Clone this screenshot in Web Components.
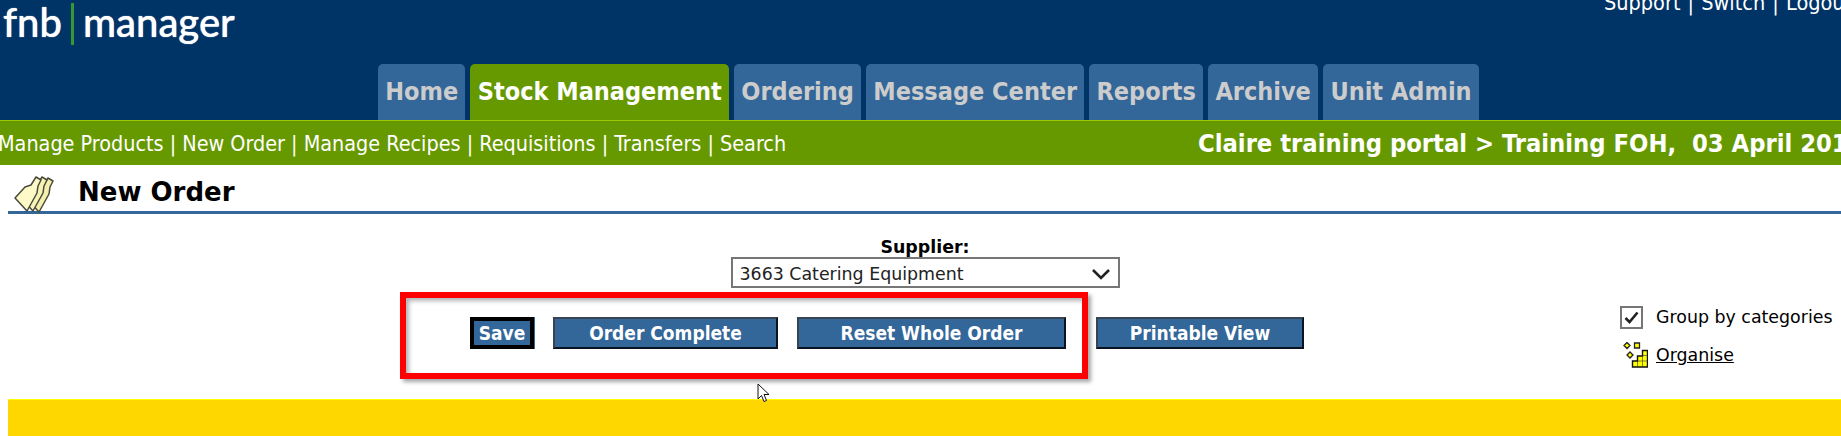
<!DOCTYPE html>
<html>
<head>
<meta charset="utf-8">
<title>New Order</title>
<style>
html, body { margin: 0; height: 436px; overflow: hidden; background: #fff; }
body { position: relative; width: 1841px; font-family: "DejaVu Sans", sans-serif; }
</style>
</head>
<body>
<fnb-header>
    <fnb-tab>Home</fnb-tab>
    <fnb-tab active>Stock Management</fnb-tab>
    <fnb-tab>Ordering</fnb-tab>
    <fnb-tab>Message Center</fnb-tab>
    <fnb-tab>Reports</fnb-tab>
    <fnb-tab>Archive</fnb-tab>
    <fnb-tab>Unit Admin</fnb-tab>
</fnb-header>
<fnb-subnav portal="Claire training portal &gt; Training FOH,&nbsp; 03 April 2017"></fnb-subnav>
<fnb-title>New Order</fnb-title>
<order-form></order-form>
<yellow-bar></yellow-bar>
<red-mark></red-mark>
<mouse-cursor></mouse-cursor>

<script>
class FnbHeader extends HTMLElement {
    constructor(){
        super();
        this.attachShadow({mode: 'open'})
    }
    connectedCallback(){
        this.shadowRoot.innerHTML = `
            <style>
            :host { display: block; height: 120px; background: #003366; overflow: hidden; }
            .top { display: flex; height: 64px; }
            .logo { display: flex; align-items: flex-start; flex: none; box-sizing: border-box; width: 1604px; color: #fff;
                    font: 500 40px/1 Lato, sans-serif; padding: 2px 0 0 3px; text-shadow: 0 0 1px #fff; }
            .logo i { display: block; width: 3px; height: 42px; background: #339933; margin: 1px 9px 0 9px; }
            .links { flex: none; color: #fff; font-size: 21.5px; font-stretch: condensed; word-spacing: 1px; line-height: 24px; margin-top: -9px; white-space: nowrap; }
            .tabs { display: flex; gap: 5px; padding-left: 378px; height: 56px; }
            </style>
            <div class="top">
                <div class="logo"><span>fnb</span><i></i><span>manager</span></div>
                <div class="links">Support | Switch | Logout</div>
            </div>
            <div class="tabs"><slot></slot></div>
        `
    }
}

class FnbTab extends HTMLElement {
    constructor(){
        super();
        this.attachShadow({mode: 'open'})
    }
    connectedCallback(){
        this.shadowRoot.innerHTML = `
            <style>
            :host { display: block; height: 56px; padding: 0 7.25px; background: #336699; color: #cccccc;
                    border-radius: 5px 5px 0 0; font: bold 25px/56px "DejaVu Sans", sans-serif; font-stretch: condensed; white-space: nowrap; }
            :host([active]) { background: #669900; color: #fff; }
            </style>
            <slot></slot>
        `
    }
}

class FnbSubnav extends HTMLElement {
    constructor(){
        super();
        this.attachShadow({mode: 'open'})
    }
    connectedCallback(){
        this.shadowRoot.innerHTML = `
            <style>
            :host { display: flex; align-items: center; height: 44px; background: #669900;
                    border-top: 1px solid #99cc00; color: #fff; overflow: hidden; white-space: nowrap; font-stretch: condensed; }
            .links { font-size: 21.4px; margin-left: -2px; flex: none; width: 1200px; }
            .portal { font-size: 25.3px; font-weight: bold; flex: none; }
            </style>
            <div class="links">Manage Products | New Order | Manage Recipes | Requisitions | Transfers | Search</div>
            <div class="portal">${this.getAttribute('portal')}</div>
        `
    }
}

class FnbTitle extends HTMLElement {
    constructor(){
        super();
        this.attachShadow({mode: 'open'})
    }
    connectedCallback(){
        this.shadowRoot.innerHTML = `
            <style>
            :host { display: flex; align-items: flex-start; height: 46px; margin-left: 8px; border-bottom: 3px solid #336699; }
            svg { width: 44px; height: 42px; margin: 9px 19px 0 7px; flex: none; overflow: visible; }
            h1 { margin: 12px 0 0; font-size: 26px; line-height: 30px; font-weight: bold; color: #000; }
            </style>
            <svg viewBox="10 4 44 42">
                <defs>
                    <path id="bottle" d="M10 28 L20 17 L26 15 L31 7 L36 10 L33 16 L32 23 L22 41 Z" stroke="#4a4a3a" stroke-width="1.5" stroke-linejoin="round"/>
                </defs>
                <use href="#bottle" transform="translate(12 1)" fill="#f4efac"/>
                <use href="#bottle" transform="translate(6 0)" fill="#f8f4b8"/>
                <use href="#bottle" fill="#fdfac8"/>
            </svg>
            <h1><slot></slot></h1>
        `
    }
}

class FnbButton extends HTMLElement {
    constructor(){
        super();
        this.attachShadow({mode: 'open'})
    }
    connectedCallback(){
        this.shadowRoot.innerHTML = `
            <style>
            :host { display: flex; align-items: center; justify-content: center; box-sizing: border-box; height: 32px;
                    background: #336699; color: #fff; border: 2px solid; border-color: #3a4450 #0a1420 #0a1420 #3a4450;
                    font: bold 19px "DejaVu Sans", sans-serif; font-stretch: condensed; white-space: nowrap; }
            :host([focused]) { border: 4px solid #000; box-shadow: 1px 0 0 #336699; }
            </style>
            <slot></slot>
        `
    }
}

class OrderForm extends HTMLElement {
    constructor(){
        super();
        this.attachShadow({mode: 'open'})
    }
    connectedCallback(){
        this.shadowRoot.innerHTML = `
            <style>
            :host { display: block; height: 185px; font-size: 17.4px; color: #000; }
            .supplier { display: flex; flex-direction: column; align-items: center; padding: 23px 0 0 9px; width: 1841px; box-sizing: border-box; }
            .supplier b { line-height: 20px; }
            .select { box-sizing: border-box; width: 389px; height: 31px; border: 2px solid #767676; display: flex; align-items: center;
                      justify-content: space-between; padding: 2px 7px 0 7px; color: #222; }
            .select svg { width: 20px; height: 12px; }
            .row { display: flex; gap: 19px; margin: 29px 0 0 470px; }
            .row fnb-button:nth-child(1) { width: 64px; }
            .row fnb-button:nth-child(2) { width: 225px; }
            .row fnb-button:nth-child(3) { width: 269px; margin-right: 11px; }
            .row fnb-button:nth-child(4) { width: 208px; }
            .side { position: absolute; left: 1620px; top: 305px; }
            .check { display: flex; align-items: center; gap: 13px; height: 24px; }
            .box { box-sizing: border-box; width: 23px; height: 23px; border: 2px solid #767676; display: flex; align-items: center; justify-content: center; }
            .box svg { width: 15px; height: 13px; }
            .org { display: flex; align-items: center; gap: 8px; margin: 13px 0 0 2px; height: 26px; }
            .org a { color: #000; text-decoration: underline; }
            .org svg { width: 26px; height: 26px; }
            </style>
            <div class="supplier">
                <b>Supplier:</b>
                <div class="select">
                    <span>3663 Catering Equipment</span>
                    <svg viewBox="0 0 20 12"><path d="M2 2 l8 8 8 -8" fill="none" stroke="#222" stroke-width="2.6"/></svg>
                </div>
            </div>
            <div class="row">
                <fnb-button focused>Save</fnb-button>
                <fnb-button>Order Complete</fnb-button>
                <fnb-button>Reset Whole Order</fnb-button>
                <fnb-button>Printable View</fnb-button>
            </div>
            <div class="side">
                <div class="check">
                    <div class="box"><svg viewBox="0 0 15 13"><path d="M1.5 7 l4 4 8 -9.5" fill="none" stroke="#222" stroke-width="2.6"/></svg></div>
                    <span>Group by categories</span>
                </div>
                <div class="org">
                    <svg viewBox="0 0 26 26">
                        <path d="M5 0.5 L8 3.5 L5 6.5 L2 3.5Z M12.5 1 h5 v5 h-5Z M8 10 L11 13 L8 16 L5 13Z" fill="#ffff00" stroke="#222" stroke-width="1.3"/>
                        <path d="M20.5 8.5 h5 v16.5 h-15 v-6 h5 v-5 h5Z" fill="#ffff00" stroke="#111" stroke-width="1.4"/>
                        <path d="M15.5 19 h10 M20.5 13.5 h5 M20.5 13.5 v11.5 M15.5 19 v6" stroke="#333" stroke-width="0.6" fill="none"/>
                    </svg>
                    <a>Organise</a>
                </div>
            </div>
        `
    }
}

class YellowBar extends HTMLElement {
    constructor(){
        super();
        this.attachShadow({mode: 'open'})
    }
    connectedCallback(){
        this.shadowRoot.innerHTML = `
            <style>
            :host { display: block; height: 37px; margin-left: 8px; background: #ffd700; border-top: 1px solid #ffff00; }
            </style>
        `
    }
}

class RedMark extends HTMLElement {
    constructor(){
        super();
        this.attachShadow({mode: 'open'})
    }
    connectedCallback(){
        this.shadowRoot.innerHTML = `
            <style>
            :host { display: block; position: absolute; left: 400px; top: 292px; width: 688px; height: 87px; box-sizing: border-box;
                    border: 6px solid #ff0000; box-shadow: 3px 3px 4px rgba(0,0,0,.35), inset 3px 3px 4px rgba(0,0,0,.3); pointer-events: none; }
            </style>
        `
    }
}

class MouseCursor extends HTMLElement {
    constructor(){
        super();
        this.attachShadow({mode: 'open'})
    }
    connectedCallback(){
        this.shadowRoot.innerHTML = `
            <style>
            :host { display: block; position: absolute; left: 757px; top: 383px; width: 14px; height: 20px; }
            svg { display: block; width: 14px; height: 20px; }
            </style>
            <svg viewBox="0 0 14 20"><path d="M1 1 v15 l3.5 -3.5 2.5 6 2.5 -1 -2.5 -6 h5z" fill="#fff" stroke="#111" stroke-width="1"/></svg>
        `
    }
}

customElements.define('fnb-header', FnbHeader)
customElements.define('fnb-tab', FnbTab)
customElements.define('fnb-subnav', FnbSubnav)
customElements.define('fnb-title', FnbTitle)
customElements.define('fnb-button', FnbButton)
customElements.define('order-form', OrderForm)
customElements.define('yellow-bar', YellowBar)
customElements.define('red-mark', RedMark)
customElements.define('mouse-cursor', MouseCursor)
</script>
</body>
</html>
